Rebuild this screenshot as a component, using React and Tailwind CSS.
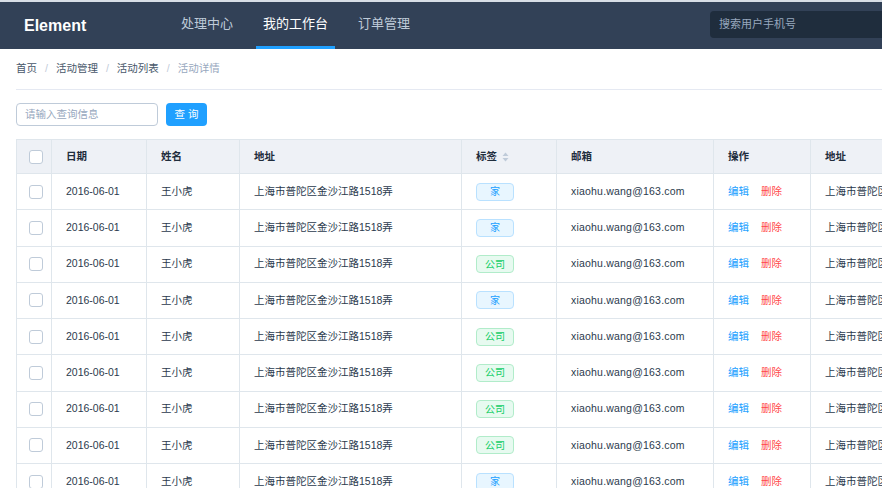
import React from 'react'

const font = { fontFamily: '"Liberation Sans", "Noto Sans CJK SC", sans-serif' }

const tags = ['家', '家', '公司', '家', '公司', '公司', '公司', '公司', '家', '公司']

const cols = ['w-[35px]', 'w-[95px]', 'w-[93px]', 'w-[222px]', 'w-[95px]', 'w-[157px]', 'w-[97px]', 'w-[200px]']

function Checkbox() {
  return <span className="block w-[14px] h-[14px] rounded-[3px] border border-[#bfcbd9] bg-white" />
}

function SortIcon() {
  return (
    <svg width="7" height="10" viewBox="0 0 7 10" className="ml-[5px]">
      <path d="M3.5 0.5 L6.5 4 L0.5 4 Z" fill="#bfcbd9" />
      <path d="M3.5 9.5 L6.5 6 L0.5 6 Z" fill="#bfcbd9" />
    </svg>
  )
}

function Tag({ label }) {
  const home = label === '家'
  return (
    <span className={`flex items-center justify-center w-[38px] h-[18px] rounded-[4px] border text-[10px] ${home ? 'bg-[#e8f6ff] border-[#b9e1ff] text-[#20a0ff]' : 'bg-[#e7faf0] border-[#b1ecca] text-[#13ce66]'}`}>
      {label}
    </span>
  )
}

function Cell({ i, children, header }) {
  return (
    <div className={`${cols[i]} shrink-0 h-full flex items-center border-r border-[#dfe6ec] ${i === 0 ? 'pl-[12px]' : 'pl-[14px]'} ${header ? 'font-bold' : ''} whitespace-nowrap overflow-hidden`}>
      {children}
    </div>
  )
}

export default function App() {
  return (
    <div className="w-[882px] h-[488px] overflow-hidden bg-white text-[#2b3a4d]" style={font}>
      <div className="h-[49px] bg-[#324157] border-t-2 border-[#d8dee6] flex items-stretch">
        <div className="w-[174px] pl-[24px] flex items-center text-white font-bold text-[16px]">Element</div>
        <nav className="flex gap-[16px] text-[13px]">
          <div className="px-[7px] flex items-center text-[#bfcbd9] border-b-[3px] border-transparent">处理中心</div>
          <div className="px-[7px] flex items-center text-white border-b-[3px] border-[#20a0ff]">我的工作台</div>
          <div className="px-[7px] flex items-center text-[#bfcbd9] border-b-[3px] border-transparent">订单管理</div>
        </nav>
        <div className="ml-auto flex items-center pb-[2px]">
          <div className="w-[180px] h-[27px] mr-[-8px] rounded-[4px] bg-[#1f2d3d] flex items-center pl-[9px] text-[11px] text-[#97a8be]">
            搜索用户手机号
          </div>
        </div>
      </div>

      <div className="pl-[16px]">
        <div className="h-[41px] border-b border-[#e5e9f2] flex items-center text-[10.5px] text-[#48576a]">
          <span>首页</span>
          <span className="mx-[8px] text-[#bfcbd9]">/</span>
          <span>活动管理</span>
          <span className="mx-[8px] text-[#bfcbd9]">/</span>
          <span>活动列表</span>
          <span className="mx-[8px] text-[#bfcbd9]">/</span>
          <span className="text-[#97a8be]">活动详情</span>
        </div>

        <div className="mt-[13px] flex items-center gap-[8px]">
          <div className="w-[142px] h-[23px] rounded-[4px] border border-[#bfcbd9] flex items-center pl-[8px] text-[10.5px] text-[#97a8be]">
            请输入查询信息
          </div>
          <button className="w-[41px] h-[23px] rounded-[4px] bg-[#20a0ff] text-white text-[10.5px] tracking-[3px] pl-[3px]">查询</button>
        </div>

        <div className="mt-[13px] w-[1100px] border-l border-t border-[#dfe6ec] text-[10.5px]">
          <div className="h-[34px] flex bg-[#eef1f6] border-b border-[#dfe6ec] text-[#1f2d3d]">
            <Cell i={0} header><Checkbox /></Cell>
            <Cell i={1} header>日期</Cell>
            <Cell i={2} header>姓名</Cell>
            <Cell i={3} header>地址</Cell>
            <Cell i={4} header>标签<SortIcon /></Cell>
            <Cell i={5} header>邮箱</Cell>
            <Cell i={6} header>操作</Cell>
            <Cell i={7} header>地址</Cell>
          </div>
          {tags.map((t, idx) => (
            <div key={idx} className="h-[36.25px] flex border-b border-[#dfe6ec]">
              <Cell i={0}><Checkbox /></Cell>
              <Cell i={1}>2016-06-01</Cell>
              <Cell i={2}>王小虎</Cell>
              <Cell i={3}>上海市普陀区金沙江路1518弄</Cell>
              <Cell i={4}><Tag label={t} /></Cell>
              <Cell i={5}><span className="tracking-[0.2px]">xiaohu.wang@163.com</span></Cell>
              <Cell i={6}>
                <span className="text-[#20a0ff]">编辑</span>
                <span className="ml-[12px] text-[#ff4949]">删除</span>
              </Cell>
              <Cell i={7}>上海市普陀区金沙江路1518弄</Cell>
            </div>
          ))}
        </div>
      </div>
    </div>
  )
}
